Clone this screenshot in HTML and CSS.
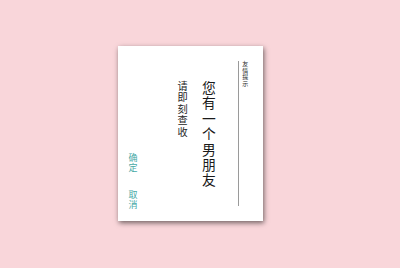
FILE: index.html
```html
<!DOCTYPE html>
<html lang="zh">
<head>
<meta charset="utf-8">
<link rel="stylesheet" href="styles.css">
</head>
<body>
<div class="stage">
  <div class="card">
    <div class="head"><span class="col">友情提示</span></div>
    <div class="main col">您有一个男朋友</div>
    <div class="sub col">请即刻查收</div>
    <div class="actions">
      <span class="btn col">确定</span>
      <span class="btn col">取消</span>
    </div>
  </div>
</div>
</body>
</html>
```
FILE: styles.css
```css
html, body {
  margin: 0;
  padding: 0;
  background: #f9d6da;
}
.stage {
  width: 400px;
  height: 268px;
  padding: 46px 0 0 118px;
  box-sizing: border-box;
  font-family: "Noto Sans CJK SC", "Noto Sans CJK JP", sans-serif;
}
.card {
  display: flex;
  flex-direction: row-reverse;
  align-items: flex-start;
  width: 145px;
  height: 175px;
  box-sizing: border-box;
  padding: 15px 14.5px 11px 10px;
  background: #fff;
  box-shadow: 1px 2px 5px rgba(0, 0, 0, 0.55);
}
.col {
  display: block;
  width: 1.1em;
  word-break: break-all;
  text-align: center;
}
.head {
  align-self: stretch;
  margin-bottom: 4px;
  padding-left: 2.5px;
  border-left: 1.5px solid #9a9a9a;
  font-size: 6px;
  line-height: 6.6px;
  color: #2a2a2a;
}
.main {
  margin-right: 22px;
  padding-top: 19px;
  font-size: 13.8px;
  line-height: 15.4px;
  color: #1a1a1a;
}
.sub {
  margin-right: 13px;
  padding-top: 19px;
  font-size: 10.2px;
  line-height: 11.4px;
  color: #262626;
}
.actions {
  margin-right: auto;
  align-self: stretch;
  display: flex;
  flex-direction: column;
  justify-content: flex-end;
  gap: 17px;
  font-size: 9px;
  line-height: 10px;
  color: #45a9a6;
}
```
